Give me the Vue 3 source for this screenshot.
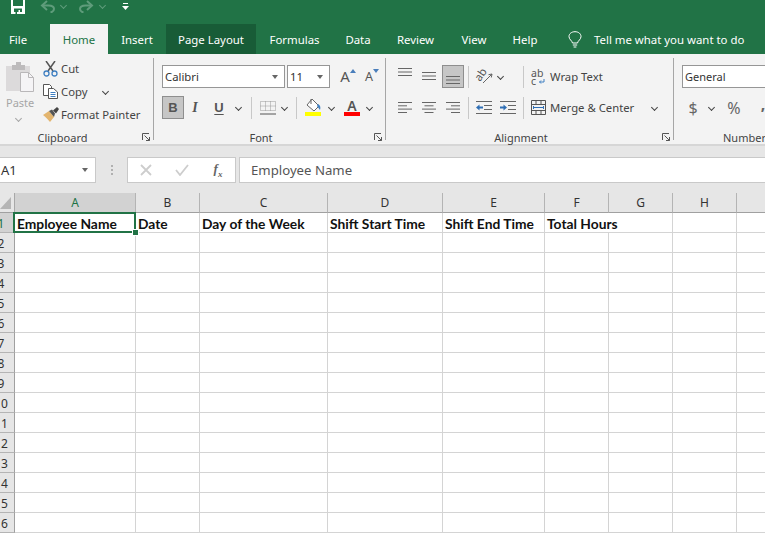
<script setup>
const tabs = ['File', 'Home', 'Insert', 'Page Layout', 'Formulas', 'Data', 'Review', 'View', 'Help']
const letters = ['A', 'B', 'C', 'D', 'E', 'F', 'G', 'H', 'I']
const headers = ['Employee Name', 'Date', 'Day of the Week', 'Shift Start Time', 'Shift End Time', 'Total Hours']
const rows = Array.from({ length: 15 }, (_, i) => i + 2)
</script>

<template>
  <div class="app">
    <div class="titlebar">
      <svg class="save" width="14" height="14" viewBox="0 0 14 14">
        <path d="M0 0h14v14H0z" fill="#fff" />
        <path d="M2 0v6h10V0z" fill="#217346" />
        <path d="M3 8.500h8V12H3z" fill="#217346" />
        <path d="M7.500 10h1.500v4H7.500z" fill="#fff" />
        <path d="M4.500 12h1.500v2H4.500z" fill="#217346" />
      </svg>
      <svg class="undo" width="15" height="13" viewBox="0 0 15 13" fill="none" stroke="#5f9c7b" stroke-width="2">
        <path d="M7 1L2 5.500 7 10" />
        <path d="M2 5.500h6.500c3.500 0 5.500 1.500 5.500 3.500s-1.500 3-3.500 3.500" />
      </svg>
      <span class="chev dim"></span>
      <svg class="redo" width="15" height="13" viewBox="0 0 15 13" fill="none" stroke="#5f9c7b" stroke-width="2">
        <path d="M8 1l5 4.500L8 10" />
        <path d="M13 5.500H6.500C3 5.500 1 7 1 9s1.500 3 3.500 3.500" />
      </svg>
      <span class="chev dim"></span>
      <svg class="custom" width="7" height="7" viewBox="0 0 7 7">
        <path d="M1 0h5v1H1z" fill="#fff" /><path d="M0 3h7L3.500 7z" fill="#fff" />
      </svg>
    </div>

    <div class="tabs">
      <div
        v-for="t in tabs"
        :key="t"
        class="tab"
        :class="{ active: t === 'Home', hover: t === 'Page Layout', file: t === 'File' }"
      >{{ t }}</div>
      <div class="tell">
        <svg width="14" height="17" viewBox="0 0 14 17" fill="none" stroke="#fff" stroke-width="1">
          <path d="M4.500 12C4 9.500 1 8.500 1 5.500 1 2.800 3.500.7 7 .7s6 2.100 6 4.800c0 3-3 4-3.500 6.500z" />
          <path d="M4.800 14h4.400M5.600 16h2.800" />
        </svg>
        <span>Tell me what you want to do</span>
      </div>
    </div>

    <div class="ribbon">
      <section class="group clip">
        <div class="body clip-body">
          <div class="paste">
            <svg width="28" height="30" viewBox="0 0 28 30">
              <path d="M0 4h24v25H0z" fill="#dcdadb" />
              <path d="M6 3h4V0h5v3h4v5H6z" fill="#bdbbbc" />
              <path d="M14.500 10.500h8l5 5v14h-13z" fill="#f5f4f6" stroke="#b9b7b9" />
              <path d="M22.500 10.500v5h5" fill="none" stroke="#b9b7b9" />
            </svg>
            <span class="paste-text">Paste</span>
            <span class="chev faint"></span>
          </div>
          <div class="clip-list">
            <div class="clip-row">
              <svg width="15" height="16" viewBox="0 0 15 16" fill="none">
                <path d="M3 0l7 10M12 0L5 10" stroke="#555" stroke-width="1.500" />
                <circle cx="3.500" cy="12.500" r="2.500" stroke="#3f7fc1" stroke-width="1.300" />
                <circle cx="11.500" cy="12.500" r="2.500" stroke="#3f7fc1" stroke-width="1.300" />
              </svg>
              <span>Cut</span>
            </div>
            <div class="clip-row">
              <svg width="15" height="15" viewBox="0 0 15 15" fill="none" stroke="#555">
                <path d="M.5.500h6l2 2v9H.5z" fill="#fff" />
                <path d="M5.500 4.500h5l4 3.500v6.500h-9z" fill="#fff" />
                <path d="M7.500 8.500h5M7.500 10.500h5M7.500 12.500h5" stroke="#3f7fc1" />
              </svg>
              <span>Copy</span>
              <span class="chev copy-chev"></span>
            </div>
            <div class="clip-row">
              <svg width="16" height="15" viewBox="0 0 16 15">
                <path d="M0 8l6-4 5 6-4 5C5 13 3 10 0 8z" fill="#e3b56f" />
                <path d="M6 4l3-1.500 3 4-1 3.500z" fill="#555" />
                <path d="M10 3.500L14 0l2 2-3 4.500z" fill="#444" />
              </svg>
              <span>Format Painter</span>
            </div>
          </div>
        </div>
        <div class="label-row">
          <span class="label">Clipboard</span>
          <svg class="launcher" width="8" height="8" viewBox="0 0 8 8" fill="none" stroke="#555">
            <path d="M.5 7V.5H7M2.500 2.500l5 5M7.500 4v3.500H4" />
          </svg>
        </div>
      </section>

      <section class="group font">
        <div class="body font-body">
          <div class="font-row1">
            <div class="combo font-name">Calibri<span class="tri"></span></div>
            <div class="combo font-size">11<span class="tri"></span></div>
            <div class="size-btn big">
              <span class="a">A</span>
              <svg width="6" height="4" viewBox="0 0 6 4"><path d="M3 0l3 4H0z" fill="#4a7ebb" /></svg>
            </div>
            <div class="size-btn small">
              <span class="a">A</span>
              <svg width="6" height="4" viewBox="0 0 6 4"><path d="M0 0h6L3 4z" fill="#4a7ebb" /></svg>
            </div>
          </div>
          <div class="font-row2">
            <div class="toggle on">B</div>
            <div class="toggle ital">I</div>
            <div class="toggle under">U</div>
            <span class="chev"></span>
            <span class="sep"></span>
            <svg width="16" height="14" viewBox="0 0 16 14" fill="none">
              <path d="M.5.500h15v9H.5zM5.500.500v9M10.500.500v9M.5 5h15" stroke="#999" stroke-dasharray="1 1" />
              <path d="M0 13h16" stroke="#555" />
            </svg>
            <span class="chev"></span>
            <span class="sep"></span>
            <div class="color-btn">
              <svg width="16" height="13" viewBox="0 0 16 13" fill="none">
                <path d="M7 0l7 7-5 5-7-6z" fill="#fff" stroke="#666" />
                <path d="M6 0v5" stroke="#666" />
                <path d="M13 5c2 1 3 3 2 6-1-1-2-3-3-4z" fill="#3f7fc1" />
              </svg>
              <i class="bar yellow"></i>
            </div>
            <span class="chev"></span>
            <div class="color-btn">
              <span class="color-a">A</span>
              <i class="bar red"></i>
            </div>
            <span class="chev"></span>
          </div>
        </div>
        <div class="label-row">
          <span class="label">Font</span>
          <svg class="launcher" width="8" height="8" viewBox="0 0 8 8" fill="none" stroke="#555">
            <path d="M.5 7V.5H7M2.500 2.500l5 5M7.500 4v3.500H4" />
          </svg>
        </div>
      </section>

      <section class="group align">
        <div class="body align-grid">
          <svg class="va-top" width="14" height="8" viewBox="0 0 14 8"><path d="M0 .5h14M0 4h14M0 7.500h14" stroke="#666" /></svg>
          <svg class="va-mid" width="14" height="8" viewBox="0 0 14 8"><path d="M0 .5h14M0 4h14M0 7.500h14" stroke="#666" /></svg>
          <div class="align-on">
            <svg width="14" height="8" viewBox="0 0 14 8"><path d="M0 .5h14M0 4h14M0 7.500h14" stroke="#666" /></svg>
          </div>
          <span class="sep"></span>
          <svg class="ic-open" width="17" height="17" viewBox="0 0 17 17" fill="none">
            <text class="orient-ab" transform="translate(4 14) rotate(-55)">ab</text>
            <path d="M7 15l9-9M16 6l-3.500.7M16 6l-.7 3.500" stroke="#666" />
          </svg>
          <span class="chev orient-chev"></span>
          <span class="sep"></span>
          <svg class="ic-open" width="14" height="16" viewBox="0 0 14 16">
            <text x="0" y="7.500" class="wrap-ab">ab</text>
            <text x="0" y="15.500" class="wrap-ab">c</text>
            <path d="M13 10v3H8.500M10 11.500L8.500 13l1.500 1.500" fill="none" stroke="#3f7fc1" />
          </svg>
          <span class="align-text">Wrap Text</span>
          <span></span>

          <svg width="14" height="11" viewBox="0 0 14 11"><path d="M0 .5h14M0 3.800h9M0 7.100h14M0 10.500h9" stroke="#666" /></svg>
          <svg width="14" height="11" viewBox="0 0 14 11"><path d="M0 .5h14M2.500 3.800h9M0 7.100h14M2.500 10.500h9" stroke="#666" /></svg>
          <svg width="14" height="11" viewBox="0 0 14 11"><path d="M0 .5h14M5 3.800h9M0 7.100h14M5 10.500h9" stroke="#666" /></svg>
          <span class="sep"></span>
          <svg width="16" height="13" viewBox="0 0 16 13">
            <path d="M0 .5h16M8 4.500h8M8 8.500h8M0 12.500h16" stroke="#666" />
            <path d="M0 6.500l3.500-3v2H7v2H3.500v2z" fill="#2f6fb5" />
          </svg>
          <svg width="16" height="13" viewBox="0 0 16 13">
            <path d="M0 .5h16M8 4.500h8M8 8.500h8M0 12.500h16" stroke="#666" />
            <path d="M7 6.500l-3.500-3v2H0v2h3.500v2z" fill="#2f6fb5" />
          </svg>
          <span class="sep"></span>
          <svg width="15" height="15" viewBox="0 0 15 15" fill="none">
            <path d="M.5.500h14v14H.5zM.5 4.500h14M.5 10.500h14M5 .5v4M10 .5v4M5 10.500v4M10 10.500v4" stroke="#555" />
            <path d="M2.500 7.500h10M2.500 6v3M12.500 6v3" stroke="#2f6fb5" />
          </svg>
          <span class="align-text">Merge &amp; Center</span>
          <span class="chev"></span>
        </div>
        <div class="label-row">
          <span class="label">Alignment</span>
          <svg class="launcher" width="8" height="8" viewBox="0 0 8 8" fill="none" stroke="#555">
            <path d="M.5 7V.5H7M2.500 2.500l5 5M7.500 4v3.500H4" />
          </svg>
        </div>
      </section>

      <section class="group number">
        <div class="body number-body">
          <div class="combo number-combo">General</div>
          <div class="number-row">
            <span class="sym">$</span>
            <span class="chev"></span>
            <span class="sym">%</span>
            <span class="sym comma">,</span>
          </div>
        </div>
        <div class="label-row number-label">Number</div>
      </section>
    </div>

    <div class="formula">
      <div class="namebox">A1<span class="tri"></span></div>
      <div class="dots"><i></i><i></i><i></i></div>
      <div class="fx-box">
        <svg width="12" height="12" viewBox="0 0 12 12"><path d="M1 1l10 10M11 1L1 11" stroke="#cdcdcd" stroke-width="1.800" /></svg>
        <svg width="14" height="12" viewBox="0 0 14 12" fill="none"><path d="M1 6l4 5 8-10" stroke="#cdcdcd" stroke-width="1.800" /></svg>
        <span class="fx">f<sub>x</sub></span>
      </div>
      <div class="fx-input">Employee Name</div>
    </div>

    <div class="sheet">
      <div class="corner">
        <svg width="11" height="12" viewBox="0 0 11 12"><path d="M11 0v12H0z" fill="#b5b5b5" /></svg>
      </div>
      <div
        v-for="l in letters"
        :key="l"
        class="col-head"
        :class="{ sel: l === 'A' }"
      >{{ l }}</div>

      <div class="row-head sel">1</div>
      <div
        v-for="(h, i) in headers"
        :key="h"
        class="cell title"
        :class="{ wide: h === 'Total Hours' }"
      >
        {{ h }}
        <template v-if="i === 0">
          <div class="selection"></div>
          <div class="handle"></div>
        </template>
      </div>
      <div class="cell"></div>
      <div class="cell"></div>

      <template v-for="r in rows" :key="r">
        <div class="row-head">{{ r }}</div>
        <div v-for="l in letters" :key="l" class="cell"></div>
      </template>
    </div>
  </div>
</template>

<style scoped>
.app {
  width: 765px;
  height: 533px;
  overflow: hidden;
  background: #fff;
  font-family: "Noto Sans", "Open Sans", sans-serif;
  font-size: 11.3px;
  color: #444;
}

.titlebar {
  height: 24px;
  background: #217346;
  display: flex;
  align-items: flex-start;
}
.save { margin-left: 11px; }
.undo { margin-left: 15px; }
.redo { margin-left: 13px; }
.chev {
  display: inline-block;
  width: 4px;
  height: 4px;
  border-right: 1px solid #444;
  border-bottom: 1px solid #444;
  transform: rotate(45deg);
  justify-self: center;
  align-self: center;
}
.titlebar .chev { margin: 3px 0 0 6px; align-self: flex-start; }
.chev.dim { border-color: #5f9c7b; }
.chev.faint { border-color: #a5a5a5; }
.custom { margin: 3px 0 0 17px; }

.tabs {
  height: 30px;
  background: #217346;
  display: grid;
  grid-template-columns: 50px 58px 58px 90px 77px 50px 65px 52px 50px 1fr;
  color: #fff;
  font-size: 11.4px;
}
.tab {
  display: flex;
  align-items: center;
  justify-content: center;
}
.tab.file { padding-right: 14px; }
.tab.active { background: #f3f3f3; color: #217346; }
.tab.hover { background: #185c37; }
.tell {
  display: flex;
  align-items: center;
  gap: 12px;
  padding-left: 18px;
  white-space: nowrap;
}

.ribbon {
  height: 92px;
  box-sizing: border-box;
  padding: 4px 0;
  background: #f3f3f3;
  border-bottom: 2px solid #d6d6d6;
  display: flex;
}
.group {
  display: flex;
  flex-direction: column;
  box-sizing: border-box;
  border-right: 1px solid #a6a6a6;
  flex: none;
}
.body { flex: 1; }
.label-row {
  display: flex;
  align-items: center;
  height: 14px;
  margin-bottom: -4px;
  font-size: 11px;
  color: #444;
  flex: none;
}
.label { flex: 1; text-align: center; }
.launcher { margin: 0 3px 0 6px; flex: none; }

.clip { width: 154px; }
.clip .launcher { margin-left: 17px; }
.clip-body { display: flex; padding-left: 6px; }
.paste {
  width: 37px;
  padding-top: 4px;
  display: flex;
  flex-direction: column;
  box-sizing: border-box;
}
.paste-text {
  color: #a6a6a6;
  font-size: 11px;
  line-height: 16px;
  margin-top: 3px;
  width: 24px;
  text-align: center;
}
.paste .chev { align-self: flex-start; margin: 5px 0 0 10px; }
.clip-list { margin-top: -1px; }
.clip-row {
  height: 23px;
  display: grid;
  grid-template-columns: 18px auto auto;
  justify-content: start;
  align-items: center;
  white-space: nowrap;
}
.copy-chev { margin-left: 16px; }

.font { width: 232px; }
.font-body { padding: 7px 0 0 8px; }
.font-row1 { display: flex; height: 23px; }
.combo {
  box-sizing: border-box;
  height: 23px;
  background: #fff;
  border: 1px solid #969696;
  display: flex;
  align-items: center;
  justify-content: space-between;
  padding: 0 6px 0 2px;
  color: #333;
  font-size: 11.3px;
  flex: none;
}
.font-name { width: 123px; }
.font-size { width: 43px; margin-left: 2px; }
.tri {
  width: 0;
  height: 0;
  border-left: 3.500px solid transparent;
  border-right: 3.500px solid transparent;
  border-top: 4px solid #666;
}
.size-btn {
  display: flex;
  align-items: flex-start;
  justify-content: center;
  color: #555;
}
.size-btn.big { width: 24px; margin-left: 6px; }
.size-btn.small { width: 24px; }
.size-btn .a { font-size: 15px; line-height: 23px; }
.size-btn.small .a { font-size: 12.500px; }
.size-btn svg { margin-top: 4px; }
.font-row2 {
  margin-top: 8px;
  height: 23px;
  display: grid;
  grid-template-columns: 22px 22px 26px 13px 12px 21px 12px 13px 20px 17px 24px 10px;
  align-items: center;
  justify-items: center;
}
.toggle { font-family: "Liberation Sans", sans-serif; font-size: 13px; color: #555; }
.toggle.on {
  box-sizing: border-box;
  width: 22px;
  height: 23px;
  background: #c6c6c6;
  border: 1px solid #8e8e8e;
  font-weight: 700;
  display: flex;
  align-items: center;
  justify-content: center;
}
.toggle.ital { font-style: italic; font-family: "Liberation Serif", serif; font-size: 14px; font-weight: 700; }
.toggle.under { text-decoration: underline; font-weight: 700; text-underline-offset: 2px; }
.sep {
  width: 1px;
  height: 22px;
  background: #c8c8c8;
  justify-self: center;
}
.color-btn {
  display: flex;
  flex-direction: column;
  align-items: center;
  width: 16px;
}
.color-a {
  font-size: 14px;
  line-height: 13px;
  font-weight: 600;
  color: #555;
}
.bar { display: block; width: 16px; height: 4px; }
.bar.yellow { background: #ffff00; }
.bar.red { background: #ff0000; }

.align { width: 288px; }
.align-grid {
  padding: 7px 0 0 7px;
  display: grid;
  grid-template-columns: 24px 24px 24px 7px 24px 24px 6px 24px 98px 12px;
  grid-template-rows: 23px 23px;
  row-gap: 8px;
  align-items: center;
  justify-items: center;
  align-content: start;
}
.va-top { align-self: start; margin-top: 3px; }
.va-mid { align-self: start; margin-top: 7px; }
.align-on {
  box-sizing: border-box;
  width: 22px;
  height: 23px;
  background: #c6c6c6;
  border: 1px solid #8e8e8e;
  display: flex;
  align-items: flex-end;
  justify-content: center;
  padding-bottom: 3px;
}
.ic-open { overflow: visible; }
.orient-chev { justify-self: start; margin-left: 2px; }
.orient-ab { font-size: 11px; fill: #555; }
.align-text { justify-self: start; white-space: nowrap; }
.wrap-ab { font-size: 10.5px; fill: #555; }

.number { width: 100px; }
.number-body { padding: 7px 0 0 8px; }
.number-combo { width: 110px; font-size: 11px; }
.number-row {
  margin-top: 8px;
  height: 23px;
  display: grid;
  grid-template-columns: 22px 14px 32px 14px;
  align-items: center;
  justify-items: center;
  color: #666;
}
.sym { font-size: 16px; }
.comma { font-weight: 700; line-height: 15px; padding-bottom: 6px; margin-left: 12px; }
.number-label { padding-left: 49px; white-space: nowrap; }

.formula {
  height: 47px;
  box-sizing: border-box;
  padding: 11px 0 10px;
  background: #e6e6e6;
  display: flex;
  align-items: stretch;
}
.namebox {
  box-sizing: border-box;
  width: 98px;
  margin-left: -2px;
  padding: 0 7px 0 2px;
  background: #fff;
  border: 1px solid #c9c9c9;
  display: flex;
  align-items: center;
  justify-content: space-between;
  font-size: 13px;
  color: #333;
}
.dots {
  width: 31px;
  display: flex;
  flex-direction: column;
  align-items: center;
  justify-content: center;
  gap: 2px;
}
.dots i { width: 2px; height: 2px; background: #b0b0b0; display: block; }
.fx-box {
  box-sizing: border-box;
  width: 109px;
  background: #fff;
  border: 1px solid #c9c9c9;
  display: grid;
  grid-template-columns: repeat(3, 36px);
  align-items: center;
  justify-items: center;
}
.fx {
  font-family: "Liberation Serif", serif;
  font-style: italic;
  font-weight: 700;
  font-size: 13px;
  color: #666;
}
.fx sub { font-size: 9px; }
.fx-input {
  flex: 1;
  margin-left: 3px;
  padding-left: 11px;
  background: #fff;
  border: 1px solid #c9c9c9;
  border-right: none;
  display: flex;
  align-items: center;
  font-size: 13.2px;
  color: #555;
}

.sheet {
  margin-left: -12px;
  display: grid;
  grid-template-columns: 27px 121px 64px 128px 115px 102px 64px 64px 64px 64px;
  grid-auto-rows: 20px;
  width: 813px;
}
.corner {
  background: #e6e6e6;
  box-sizing: border-box;
  border-right: 1px solid #a8a8a8;
  border-bottom: 1px solid #a0a0a0;
  display: flex;
  align-items: flex-end;
  justify-content: flex-end;
  padding: 0 3px 3px 0;
}
.col-head {
  background: #e6e6e6;
  box-sizing: border-box;
  border-right: 1px solid #b4b4b4;
  border-bottom: 1px solid #a0a0a0;
  display: flex;
  align-items: center;
  justify-content: center;
  font-size: 12px;
  color: #333;
}
.col-head.sel {
  background: #d2d2d2;
  color: #217346;
}
.row-head {
  background: #e6e6e6;
  box-sizing: border-box;
  border-right: 1px solid #a0a0a0;
  border-bottom: 1px solid #b4b4b4;
  padding-top: 1px;
  display: flex;
  align-items: center;
  justify-content: center;
  font-size: 12px;
  color: #333;
}
.row-head.sel {
  background: #d2d2d2;
  color: #217346;
}
.cell {
  box-sizing: border-box;
  border-right: 1px solid #d4d4d4;
  border-bottom: 1px solid #d4d4d4;
  position: relative;
}
.cell.title {
  font-family: Lato, "Liberation Sans", sans-serif;
  font-weight: 700;
  font-size: 13.8px;
  line-height: 21px;
  color: #111;
  padding-left: 2px;
  white-space: nowrap;
}
.cell.wide { grid-column: span 2; }
.selection {
  position: absolute;
  left: -2px;
  top: -1px;
  right: -1px;
  bottom: -1px;
  border: 2px solid #217346;
}
.handle {
  position: absolute;
  right: -3px;
  bottom: -3px;
  width: 5px;
  height: 5px;
  background: #217346;
  outline: 1px solid #fff;
  z-index: 1;
}
</style>

<style>
body { background: #fff; overflow: hidden; }
</style>
